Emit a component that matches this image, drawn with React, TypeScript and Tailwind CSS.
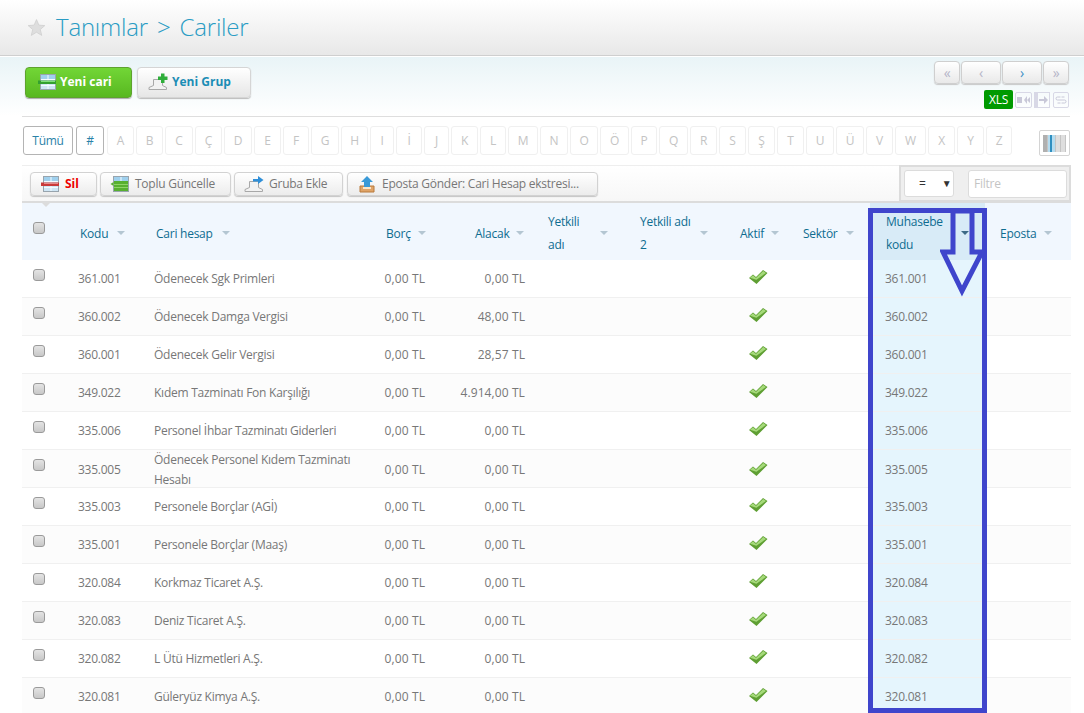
import React from 'react';

const LETTERS: [string, number][] = [
  ['A', 27], ['B', 27], ['C', 28], ['Ç', 27], ['D', 28], ['E', 27], ['F', 26], ['G', 28], ['H', 27], ['I', 24],
  ['İ', 26], ['J', 25], ['K', 27], ['L', 26], ['M', 30], ['N', 28], ['O', 28], ['Ö', 29], ['P', 26], ['Q', 29],
  ['R', 27], ['S', 27], ['Ş', 27], ['T', 27], ['U', 28], ['Ü', 28], ['V', 27], ['W', 31], ['X', 27], ['Y', 27], ['Z', 26],
];

const ROWS = [
  { code: '361.001', name: 'Ödenecek Sgk Primleri', credit: '0,00 TL' },
  { code: '360.002', name: 'Ödenecek Damga Vergisi', credit: '48,00 TL' },
  { code: '360.001', name: 'Ödenecek Gelir Vergisi', credit: '28,57 TL' },
  { code: '349.022', name: 'Kıdem Tazminatı Fon Karşılığı', credit: '4.914,00 TL' },
  { code: '335.006', name: 'Personel İhbar Tazminatı Giderleri', credit: '0,00 TL' },
  { code: '335.005', name: 'Ödenecek Personel Kıdem Tazminatı Hesabı', credit: '0,00 TL' },
  { code: '335.003', name: 'Personele Borçlar (AGİ)', credit: '0,00 TL' },
  { code: '335.001', name: 'Personele Borçlar (Maaş)', credit: '0,00 TL' },
  { code: '320.084', name: 'Korkmaz Ticaret A.Ş.', credit: '0,00 TL' },
  { code: '320.083', name: 'Deniz Ticaret A.Ş.', credit: '0,00 TL' },
  { code: '320.082', name: 'L Ütü Hizmetleri A.Ş.', credit: '0,00 TL' },
  { code: '320.081', name: 'Güleryüz Kimya A.Ş.', credit: '0,00 TL' },
];

const gridCols = 'grid grid-cols-[48px_76px_230px_60px_104px_92px_100px_64px_74px_115px_86px]';

const Checkbox = () => (
  <span className="block w-[12px] h-[12px] rounded-[3px] border border-[#9a9a9a] bg-gradient-to-b from-[#e4e4e4] to-[#c8c8c8]" />
);

const SortCaret = ({ dark }: { dark?: boolean }) => (
  <span className={`inline-block w-0 h-0 border-x-[4px] border-x-transparent border-t-[4px] ${dark ? 'border-t-[#3d6a86]' : 'border-t-[#b4c6d2]'}`} />
);

const CheckMark = () => (
  <svg width="20" height="16" viewBox="0 0 20 16">
    <path d="M1 9 L5 5.500 L8 8 L15 1 L19.500 4 L8.500 15 Z" fill="#5f9f33" />
    <path d="M2 8.800 L5 6.300 L8 9 L15.200 2 L18 4 L8.400 10.800 Z" fill="#a5d97a" />
  </svg>
);

// small table glyph used on the add, delete and bulk update buttons
const GridIcon = ({ bar, edge, fullRows }: { bar: string; edge: string; fullRows?: boolean }) => (
  <svg width="20" height="18" viewBox="0 0 20 18">
    <rect x="3.500" y="1.500" width="15" height="15" fill="#cfe6f5" stroke="#98a4ad" />
    <rect x="4" y="2" width="14" height="4" fill="#9fd0ee" />
    <path d="M4 6.500H18M4 12.500H18M11 2V16" stroke="#f4fbff" />
    {fullRows ? (
      <>
        <rect x="4" y="6" width="14" height="10" fill={bar} />
        <path d="M4 9.500H18M4 12.500H18" stroke={edge} />
        <path d="M0.500 9L3.500 7V11Z" fill={bar} />
      </>
    ) : (
      <>
        <rect x="1" y="7.500" width="18" height="3.500" fill={bar} />
        <rect x="4" y="8" width="14" height="1" fill={edge} />
      </>
    )}
  </svg>
);

const GroupIcon = ({ badge, arrow }: { badge: string; arrow?: boolean }) => (
  <svg width="20" height="18" viewBox="0 0 20 18">
    <path d="M5.500 6.500H14.500V12.500L18.500 14.500V16.500H1V14.500L5.500 12.500Z" fill="#f2f2f2" stroke="#a8a8a8" />
    {arrow ? (
      <path d="M9 4H14V1L19.500 5L14 9V6.500H9Z" fill={badge} />
    ) : (
      <path d="M13 0.500H16.500V3.500H19.500V7H16.500V10H13V7H10V3.500H13Z" fill={badge} />
    )}
  </svg>
);

const ToolButton = ({ icon, label, className }: { icon: React.ReactNode; label: string; className: string }) => (
  <button className={`h-[24px] flex items-center gap-[5px] pl-[9px] rounded-[4px] border border-[#d2d2d2] shadow-[0_1px_1px_#c4c4c4] bg-gradient-to-b from-white to-[#ececec] ${className}`}>
    {icon}
    <span className="whitespace-nowrap">{label}</span>
  </button>
);

const PageButton = ({ label, className, tone }: { label: string; className: string; tone: string }) => (
  <button className={`h-[23px] rounded-[4px] border border-[#cfcfcf] shadow-[0_1px_1px_#c8c8c8] bg-gradient-to-b from-white to-[#e9e9e9] text-[14px] leading-none ${tone} ${className}`}>
    {label}
  </button>
);

const App: React.FC = () => {
  return (
    <div className="relative w-[1084px] h-[713px] overflow-hidden bg-white text-[12px] tracking-[-0.25px] font-['Open_Sans','Noto_Sans',sans-serif] text-[#777]">
      {/* Title bar */}
      <header className="h-[56px] flex items-center pl-[27px] pb-[1px] border-b border-[#cfcfcf] bg-gradient-to-b from-white to-[#e8e8e8]">
        <svg width="19" height="19" viewBox="0 0 24 24" fill="#dedede" stroke="#cfcfcf">
          <path d="M12 2l3 7 7.500.6-5.700 4.900 1.800 7.500L12 18l-6.600 4 1.800-7.500L1.500 9.600 9 9z" />
        </svg>
        <h1 className="ml-[10px] text-[24px] font-light text-[#2a9cc4] tracking-[-0.2px] [word-spacing:3px]">Tanımlar &gt; Cariler</h1>
      </header>

      {/* Top actions */}
      <section className="h-[59px] mt-[1px] pl-[25px] pr-[15px] bg-gradient-to-b from-[#e9f4f7] to-white flex justify-between">
        <div className="flex gap-[5px] pt-[10px]">
          <button className="w-[107px] h-[31px] pb-[2px] flex items-center gap-[3px] pl-[11px] rounded-[4px] border border-[#5da32e] bg-gradient-to-b from-[#72d636] to-[#58b820] text-white font-bold tracking-normal shadow-[0_1px_1px_#aaa]">
            <GridIcon bar="#34a030" edge="#7fe07a" />
            Yeni cari
          </button>
          <button className="w-[114px] h-[31px] pb-[2px] flex items-center gap-[4px] pl-[10px] rounded-[4px] border border-[#d5d5d5] bg-gradient-to-b from-white to-[#e6e6e6] text-[#1b8db5] font-bold tracking-normal shadow-[0_1px_1px_#bbb]">
            <GroupIcon badge="#2fae3a" />
            Yeni Grup
          </button>
        </div>
        <div className="flex flex-col items-end pt-[4px]">
          <div className="flex gap-[1px]">
            <PageButton label="«" className="w-[26px]" tone="text-[#b5b5c8]" />
            <PageButton label="‹" className="w-[40px]" tone="text-[#b5b5c8]" />
            <PageButton label="›" className="w-[40px]" tone="text-[#3d8fc4]" />
            <PageButton label="»" className="w-[26px]" tone="text-[#b5b5c8]" />
          </div>
          <div className="flex items-center gap-[2px] mt-[6px]">
            <span className="w-[29px] h-[19px] flex items-center justify-center rounded-[2px] bg-[#009a00] text-white">XLS</span>
            <span className="w-[17px] h-[16px] flex items-center justify-center border border-[#d8d8e6] rounded-[2px]">
              <svg width="13" height="8" viewBox="0 0 13 8" fill="#c8c8d8"><path d="M0 1H5V7H0ZM7 4L10 0V8ZM10 4L13 1V7L10 4Z" /></svg>
            </span>
            <span className="w-[16px] h-[16px] flex items-center justify-center border-y border-r border-l-[4px] border-[#d8d8e6]">
              <svg width="9" height="8" viewBox="0 0 9 8" fill="#c8c8d8"><path d="M0 3H5V0L9 4L5 8V5H0Z" /></svg>
            </span>
            <span className="w-[16px] h-[16px] ml-[1px] flex items-center justify-center border border-[#d8d8e6] rounded-[2px]">
              <svg width="12" height="8" viewBox="0 0 12 8" fill="none" stroke="#c8c8d8"><path d="M5.500 1H2.500A1.500 1.500 0 0 0 2.500 4H9.500A1.500 1.500 0 0 1 9.500 7H6.500" /><path d="M6.500 1H9.500M5.500 7H2.500" /></svg>
            </span>
          </div>
        </div>
      </section>

      {/* Letter filter */}
      <nav className="mx-[22px] w-[1048px] h-[49px] pt-[9px] pl-[1px] border-t border-[#dedede] flex gap-[2px]">
        <span className="w-[50px] h-[29px] flex items-center justify-center rounded-[3px] border border-[#b4b4b4] text-[#2a82a8]">Tümü</span>
        <span className="w-[28px] h-[29px] ml-[1px] mr-[1px] flex items-center justify-center rounded-[3px] border border-[#b4b4b4] text-[#2a82a8]">#</span>
        {LETTERS.map(([letter, width]) => (
          <span key={letter} style={{ width }} className="h-[29px] flex items-center justify-center rounded-[3px] border border-[#f0f0f0] text-[#c4c4c4]">
            {letter}
          </span>
        ))}
        <span className="ml-auto mt-[4px] w-[31px] h-[26px] flex items-center justify-center border border-[#d4d4d4] rounded-[2px]">
          <svg width="23" height="17" viewBox="0 0 23 17">
            <rect width="23" height="17" fill="#c4c4c4" />
            <rect width="4" height="17" fill="#b0b0b0" />
            <rect x="5" width="7" height="17" fill="#b4dcf0" />
            <rect x="7" width="2" height="17" fill="#2f8fc0" />
            <rect x="13" width="4" height="17" fill="#dedede" />
            <rect x="18" width="4" height="17" fill="#dedede" />
          </svg>
        </span>
      </nav>

      {/* Bulk actions */}
      <section className="relative mx-[22px] w-[1049px] h-[38px] border-t border-[#eeeeee] border-b-2 border-b-[#dcdcdc] bg-gradient-to-b from-white to-[#f7f7f7] flex items-start gap-[3px] pl-[8px] pt-[6px]">
        <ToolButton icon={<GridIcon bar="#c93a3a" edge="#e88a8a" />} label="Sil" className="w-[67px] text-[#ee0000] font-bold tracking-normal" />
        <ToolButton icon={<GridIcon bar="#58b030" edge="#8fd468" fullRows />} label="Toplu Güncelle" className="w-[131px]" />
        <ToolButton icon={<GroupIcon badge="#2f8fd8" arrow />} label="Gruba Ekle" className="w-[109px]" />
        <ToolButton
          icon={
            <svg width="20" height="18" viewBox="0 0 18 18">
              <path d="M2 11H16V17H2Z" fill="#e0a468" stroke="#b87a3c" />
              <path d="M5 12H13V14H5Z" fill="#fbe6c8" />
              <path d="M6 12V7H3L9 1L15 7H12V12Z" fill="#3a9ad8" />
            </svg>
          }
          label="Eposta Gönder: Cari Hesap ekstresi..."
          className="w-[251px] ml-[1px]"
        />
        <span className="absolute left-[18px] bottom-[-6px] w-0 h-0 border-x-[6px] border-x-transparent border-t-[6px] border-t-[#dcdcdc]" />
        <div className="absolute right-0 top-[-1px] w-[172px] h-[37px] border-2 border-[#dcdcdc] bg-[#efefef] flex items-center gap-[14px] pl-[3px]">
          <div className="w-[50px] h-[27px] rounded-[3px] border border-[#dcdcdc] bg-white flex items-center pl-[14px] gap-[16px] text-[#333]">
            <span>=</span>
            <span className="text-[10px]">▼</span>
          </div>
          <div className="w-[99px] h-[28px] rounded-[3px] border border-[#dcdcdc] bg-white pl-[5px] leading-[26px] text-[#c4c4c4]">Filtre</div>
        </div>
      </section>

      {/* Table */}
      <div className="mx-[22px] w-[1049px]">
        <div className={`${gridCols} h-[57px] bg-[#f1f7fe] text-[#0e6c90] leading-[23px] [&>div]:pt-[3px]`}>
          <div className="pl-[11px]"><div className="mt-[16px]"><Checkbox /></div></div>
          <div className="pl-[10px] flex items-center gap-[9px]">Kodu <SortCaret /></div>
          <div className="pl-[10px] flex items-center gap-[9px]">Cari hesap <SortCaret /></div>
          <div className="pl-[10px] flex items-center gap-[7px]">Borç <SortCaret /></div>
          <div className="pl-[39px] flex items-center gap-[6px]">Alacak <SortCaret /></div>
          <div className="pl-[8px] flex items-center justify-between pr-[24px]"><span className="w-[44px]">Yetkili adı</span><SortCaret /></div>
          <div className="pl-[8px] flex items-center justify-between pr-[24px]"><span className="w-[56px]">Yetkili adı 2</span><SortCaret /></div>
          <div className="pl-[8px] flex items-center gap-[7px]">Aktif <SortCaret /></div>
          <div className="pl-[7px] flex items-center gap-[8px]">Sektör <SortCaret /></div>
          <div className="pl-[16px] flex items-center gap-[15px] bg-[#d8ebf7]"><span className="w-[60px]">Muhasebe kodu</span><SortCaret dark /></div>
          <div className="pl-[15px] flex items-center gap-[8px]">Eposta <SortCaret /></div>
        </div>
        {ROWS.map((row, index) => (
          <div key={row.code} className={`${gridCols} h-[38px] border-b border-[#f0f0f0] ${index % 2 ? 'bg-[#fcfcfc]' : 'bg-white'}`}>
            <div className="pl-[11px] pt-[9px]"><Checkbox /></div>
            <div className="pl-[8px] flex items-center">{row.code}</div>
            <div className="pl-[8px] pr-[20px] flex items-center leading-[20px]">{row.name}</div>
            <div className="pr-[11px] flex items-center justify-end tracking-[0.1px]">0,00 TL</div>
            <div className="pr-[15px] flex items-center justify-end tracking-[0.1px]">{row.credit}</div>
            <div />
            <div />
            <div className="pl-[16px] pb-[3px] flex items-center"><CheckMark /></div>
            <div />
            <div className="pl-[15px] flex items-center bg-[#e5f5fd]">{row.code}</div>
            <div />
          </div>
        ))}
      </div>

      {/* Highlight drawn over the accounting code column */}
      <div className="absolute left-[868px] top-[208px] w-[119px] h-[505px] border-[5px] border-[#3f45cc] pointer-events-none" />
      <svg className="absolute left-[940px] top-[208px] pointer-events-none" width="47" height="90" viewBox="0 0 47 90">
        <path d="M13 3V44H3L22 83L42 44H32V3Z" fill="none" stroke="#3f45cc" strokeWidth="5" strokeLinejoin="miter" />
      </svg>
    </div>
  );
};

export default App;
